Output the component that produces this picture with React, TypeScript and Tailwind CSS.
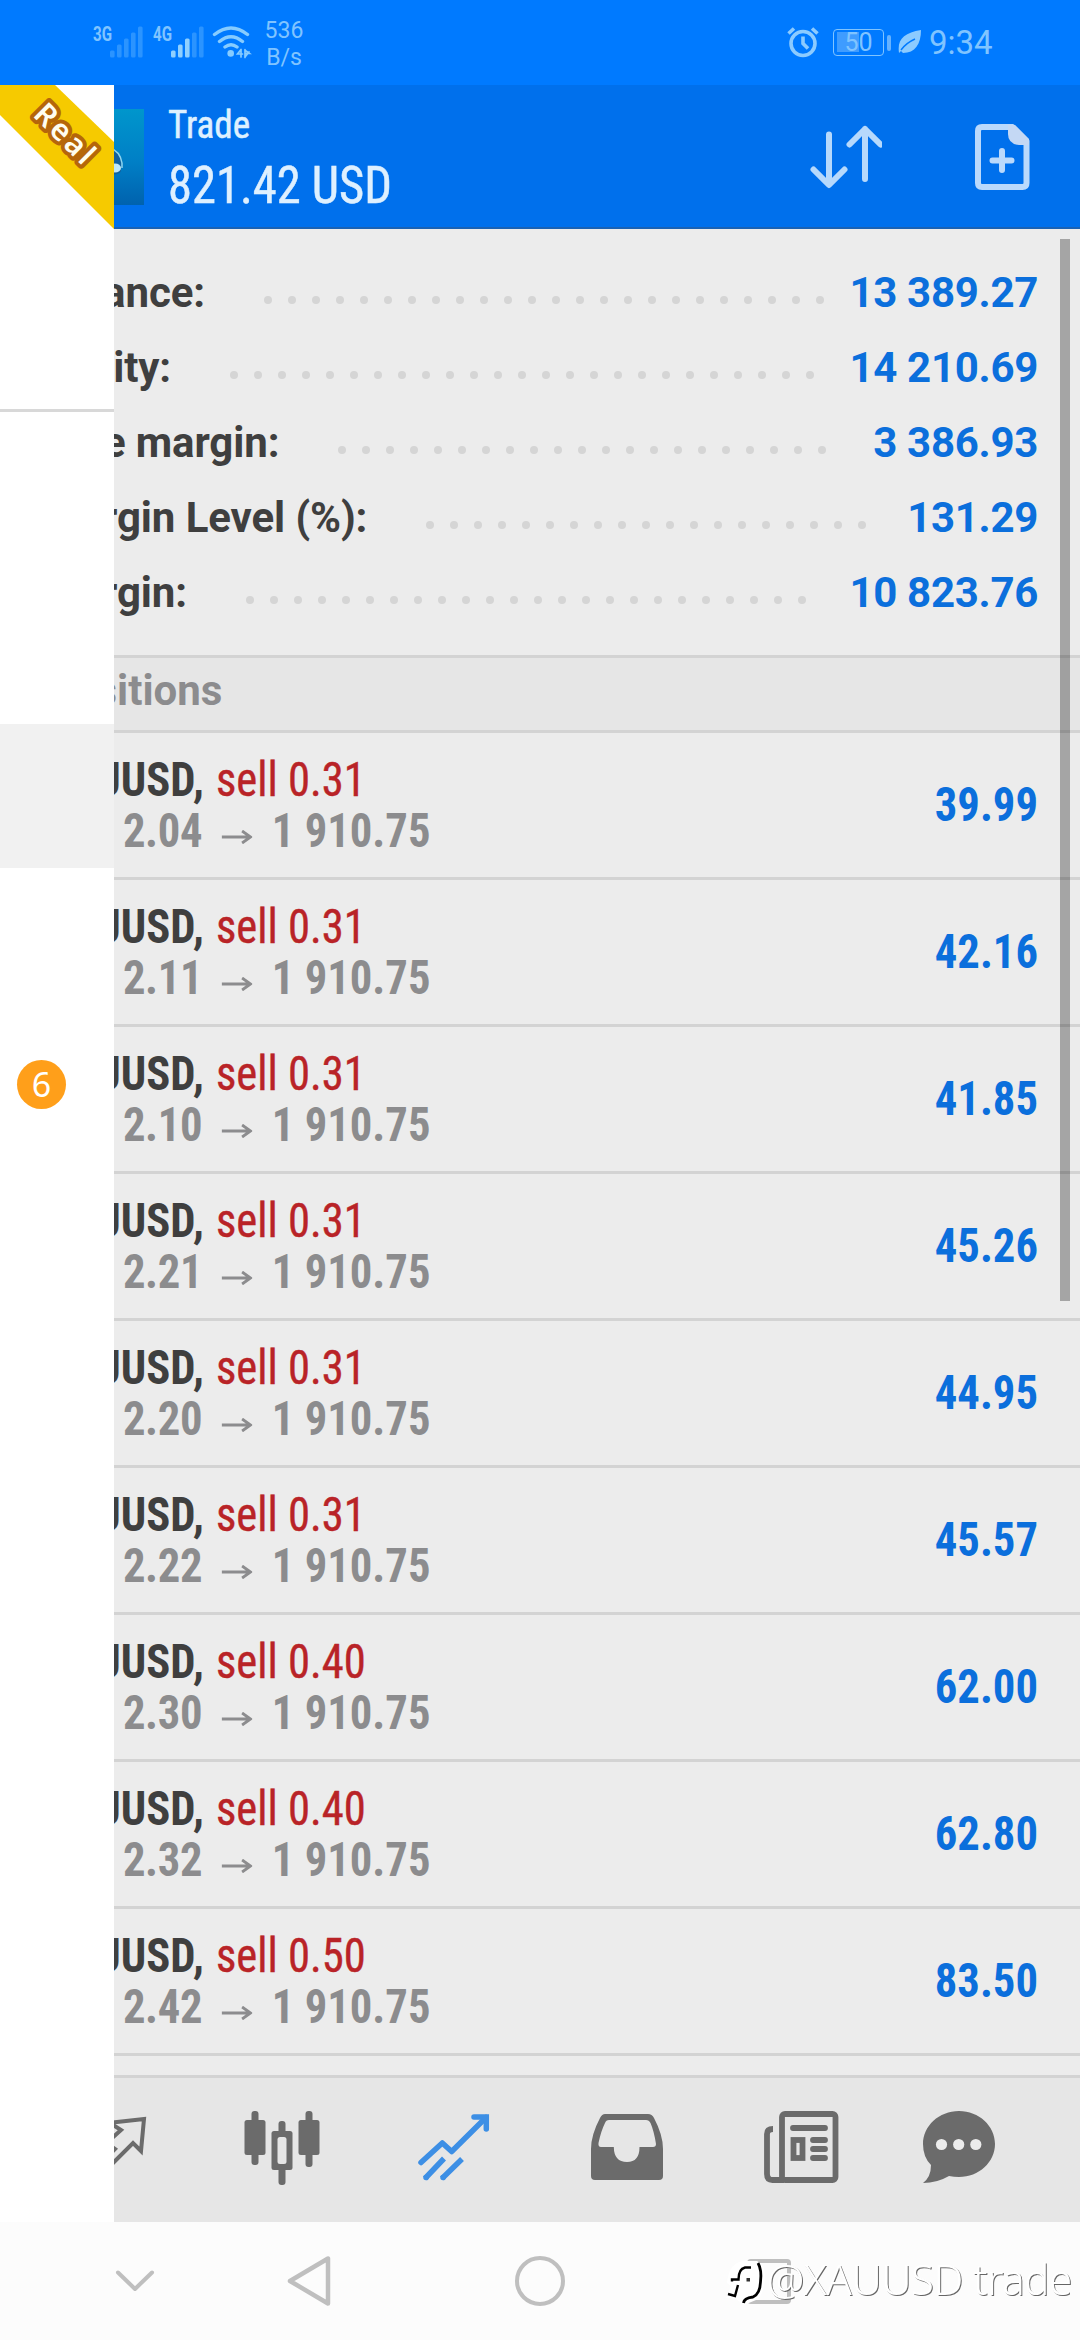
import type { ReactNode } from 'react';

const account = [
  { label: 'Balance:', dots: 24, value: '13 389.27' },
  { label: 'Equity:', dots: 25, value: '14 210.69' },
  { label: 'Free margin:', dots: 21, value: '3 386.93' },
  { label: 'Margin Level (%):', dots: 19, value: '131.29' },
  { label: 'Margin:', dots: 24, value: '10 823.76' },
];

const positions = [
  { volume: '0.31', open: '1 912.04', profit: '39.99' },
  { volume: '0.31', open: '1 912.11', profit: '42.16' },
  { volume: '0.31', open: '1 912.10', profit: '41.85' },
  { volume: '0.31', open: '1 912.21', profit: '45.26' },
  { volume: '0.31', open: '1 912.20', profit: '44.95' },
  { volume: '0.31', open: '1 912.22', profit: '45.57' },
  { volume: '0.40', open: '1 912.30', profit: '62.00' },
  { volume: '0.40', open: '1 912.32', profit: '62.80' },
  { volume: '0.50', open: '1 912.42', profit: '83.50' },
];

function Signal({ active }: { active: number }) {
  return (
    <svg className="mt-[26px] h-8 w-[34px]" viewBox="0 0 34 32" fill="#8fd0ff">
      {[7, 13, 19, 25, 31].map((h, i) => (
        <rect key={h} x={i * 7} y={31.5 - h} width="4.6" height={h} rx="1.5" opacity={i < active ? 1 : 0.3} />
      ))}
    </svg>
  );
}

function StatusBar() {
  return (
    <div className="flex h-[85px] items-start bg-[#007aff] text-[#80c4ff]">
      <span className="ml-[93px] mt-[24px] w-[17px] origin-left scale-x-[0.72] text-[21px] leading-5 font-bold">3G</span>
      <Signal active={0} />
      <span className="ml-[9px] mt-[24px] w-[18px] origin-left scale-x-[0.72] text-[21px] leading-5 font-bold">4G</span>
      <Signal active={3} />
      <svg className="ml-[7px] mt-[25px] h-[34px] w-10" viewBox="0 0 40 34" fill="none" stroke="#86ccff" strokeWidth="3.4" strokeLinecap="round">
        <path d="M2.5 9.5Q19 -3.5 35.5 9.5M7.5 16.5Q19 7 30.5 16.5M13 22Q19 17.5 25 22" />
        <circle cx="18.7" cy="28.4" r="3.3" fill="#86ccff" stroke="none" />
        <path d="M29 24.500v7.500M29 24.500l-3.500 4.500h5M33 24.500v8M33 28.500h4.500l-3.500-2.500M37 27l-4 5" strokeWidth="1.700" />
      </svg>
      <div className="ml-[12px] mt-[17px] w-10 text-center text-[23px] leading-[27px]">
        <div>536</div>
        <div>B/s</div>
      </div>

      <svg className="ml-auto mt-[25px] h-[34px] w-8" viewBox="0 0 32 34" fill="none" stroke="#8ccbff" strokeWidth="3.6">
        <circle cx="16" cy="18.500" r="12" />
        <path d="M16 11.500v7l5 5M1.500 8.500l5.500-5M30.500 8.500l-5.500-5" />
      </svg>
      <div className="ml-[14px] mt-[29px] flex h-[27px] w-[51px] items-center rounded-[4px] border border-[#80c4ff] bg-[linear-gradient(#3f9cff,#3f9cff)] bg-[length:22px_20px] bg-[position:3px_2px] bg-no-repeat">
        <span className="w-full text-center text-[25px] leading-[25px]">50</span>
      </div>
      <div className="ml-[3px] mt-[35px] h-4 w-[4px] rounded-sm bg-[#66b2ff]" />
      <svg className="ml-[7px] mt-[29px] h-[25px] w-6" viewBox="0 0 24 25">
        <path d="M1 24C-1 10 6 4 23 1c0 14-6 23-18 23l-2-2z" fill="#8ccbff" />
        <path d="M3 21Q8 14 17 10" fill="none" stroke="#007aff" strokeWidth="1.4" />
      </svg>
      <span className="ml-[7px] mt-[24px] w-[151px] text-[33px] leading-[38px]">9:34</span>
    </div>
  );
}

function Header() {
  return (
    <div className="flex h-[144px] border-b-2 border-[#1a62b4] bg-[#0070ec] text-[#def0ff]">
      <svg className="ml-12 mt-6 size-24" viewBox="0 0 96 96">
        <defs>
          <linearGradient id="sky" x1="0" y1="0" x2="0" y2="1">
            <stop offset="0" stopColor="#0096cc" />
            <stop offset="0.55" stopColor="#007fc6" />
            <stop offset="1" stopColor="#0062ae" />
          </linearGradient>
        </defs>
        <rect width="96" height="96" fill="url(#sky)" />
        <path d="M60 40Q72 42 73 54v8Q72 66 60 66z" fill="#12609c" />
        <path d="M62 39Q72 42 74 54v5" fill="none" stroke="#8fd4ee" strokeWidth="1.500" />
        <ellipse cx="67" cy="59" rx="6" ry="4.500" fill="#bfe8f8" />
      </svg>
      <div className="ml-[24px] origin-left scale-x-[0.952] pt-[18px] font-stretch-[75%] whitespace-nowrap [-webkit-text-stroke:0.5px_#def0ff]">
        <div className="text-[39px] leading-[44px]">Trade</div>
        <div className="mt-[9px] text-[51px] leading-[60px]">821.42 USD</div>
      </div>
      <svg className="ml-auto mt-[40px] h-[66px] w-[72px]" viewBox="0 0 72 66" fill="none" stroke="#b6d9fc" strokeWidth="6" strokeLinecap="round" strokeLinejoin="round">
        <path d="M19 9.500V59.500M3.500 44.500L19 60L34.500 44.500" />
        <path d="M55 54V4M39.500 19.500L55 4L70.500 19.500" />
      </svg>
      <svg className="ml-[93px] mr-[50px] mt-[39px] h-[66px] w-[55px]" viewBox="0 0 55 66" fill="none" stroke="#bad9fc" strokeWidth="6" strokeLinejoin="round">
        <path d="M7 3H37.500L51.500 17V59Q51.500 63 47.500 63H7Q3 63 3 59V7Q3 3 7 3Z" />
        <path d="M33 1H40L54 15V21H44Q33 20 33 10Z" fill="#c4d8f4" stroke="none" />
        <path d="M27 27V46M17.500 36.500H36.500" strokeLinecap="round" />
      </svg>
    </div>
  );
}

function Summary() {
  return (
    <div className="h-[426px] pt-[29px] pr-[42px] pl-[43px] text-[42px] font-bold">
      {account.map((row) => (
        <div key={row.label} className="flex h-[75px] items-start leading-[50px] whitespace-nowrap">
          <span className="pt-2.5 tracking-[-0.1px] text-[#3f3f3f]">{row.label}</span>
          <span className="mt-[38px] ml-[59px] flex gap-4">
            {Array.from({ length: row.dots }, (_, i) => (
              <span key={i} className="size-2 rounded-full bg-[#d5d5d5]" />
            ))}
          </span>
          <span className="ml-auto pt-2.5 tracking-[-0.3px] text-[#0b6fdc]">{row.value}</span>
        </div>
      ))}
    </div>
  );
}

function PositionRow({ volume, open, profit }: { volume: string; open: string; profit: string }) {
  // Last digits of the open price are set a little apart from the big figure
  const figure = open.slice(0, 4);
  const pips = open.slice(4);

  return (
    <div className="flex h-[147px] items-center justify-between border-b-[3px] border-[#d3d3d3] pr-[42px] pl-11 font-stretch-[75%] text-[48px] leading-[51px] whitespace-nowrap">
      <div className="origin-left scale-x-[0.93]">
        <div>
          <span className="font-bold text-[#3f3f3f]">XAUUSD,</span>{' '}
          <span className="ml-[2px] text-[#b92327] [-webkit-text-stroke:0.4px_#b92327]">sell {volume}</span>
        </div>
        <div className="-ml-[3px] flex items-center font-bold text-[#8c8c8e]">
          <span>{figure}</span>
          <span className="ml-[4px] tracking-[-0.4px]">{pips}</span>
          <svg className="mx-[21px] mt-3 h-[14px] w-[33px]" viewBox="0 0 33 14" fill="none" stroke="#8c8c8e" strokeWidth="3">
            <path d="M0 7H31M22 1L31 7L22 13" />
          </svg>
          <span>1 910.75</span>
        </div>
      </div>
      <span className="origin-right scale-x-[0.93] pb-[2px] font-bold text-[#0b6fdc]">{profit}</span>
    </div>
  );
}

function ToolIcon({ className = '', children }: { className?: string; children: ReactNode }) {
  return (
    <svg className={`h-[74px] w-[72px] shrink-0 overflow-visible ${className}`} viewBox="0 0 72 74">
      {children}
    </svg>
  );
}

function Toolbar() {
  return (
    <div className="flex h-[147px] gap-[100.5px] border-t-[3px] border-[#d3d3d3] bg-[#e6e6e6] pt-[33px] pl-[73px]">
      <ToolIcon>
        <g fill="none" stroke="#6b6b6b" strokeWidth="4">
          <path d="M35 12L71 8L68 40L60 32L36 56" />
          <path d="M37 12L48 19L38 28M38 35L42 38L38 42" />
        </g>
      </ToolIcon>
      <ToolIcon>
        <g fill="#6b6b6b">
          <rect x="5.500" y="0" width="7" height="54" rx="3" />
          <rect x="-1.500" y="9" width="21" height="35" rx="2.500" />
          <rect x="32.500" y="10" width="7" height="64" rx="3" />
          <rect x="25.500" y="20" width="21" height="39" rx="2.500" />
          <rect x="59.500" y="0" width="7" height="56" rx="3" />
          <rect x="52.500" y="9" width="21" height="35" rx="2.500" />
        </g>
        <rect x="31.500" y="26" width="9" height="27" rx="2.500" fill="#e6e6e6" />
      </ToolIcon>
      <ToolIcon>
        <g fill="none" stroke="#3d8fe5" strokeWidth="5.500">
          <path d="M3 51.500L24.300 32L33.700 40.500L68 6.500" strokeLinejoin="round" strokeLinecap="round" />
          <path d="M56 6H68.300V18" strokeLinecap="round" />
          <path d="M7 67.500L26 47.500M24 67.500L44 48" />
          <path d="M8 66.500h.1M25 66.500h.1" strokeLinecap="round" />
        </g>
      </ToolIcon>
      <ToolIcon>
        <path
          d="M17 3H57Q61 3 63 7Q72 24 72 38V65Q72 69 68 69H4Q0 69 0 65V38Q0 24 9 7Q11 3 14 3Z"
          fill="#6b6b6b"
        />
        <path d="M18 9H55Q58 9 59.500 12Q63 20 65 33Q65 36 62 36H48.500Q48.500 51 36 51Q23 51 22.800 36H10Q7 36 7.500 32Q10 20 14 12Q15 9 18 9Z" fill="#e6e6e6" />
      </ToolIcon>
      <ToolIcon className="translate-x-px">
        <g fill="none" stroke="#6b6b6b" strokeWidth="5.800">
          <rect x="18" y="3" width="53.500" height="66" rx="3" />
          <path d="M9 18Q3 18 3 23V63Q3 69 8.500 69H20" />
          <path d="M29 17H61M49 29H61M49 38H61M49 47H61" strokeLinecap="round" />
          <rect x="29.500" y="29" width="9" height="18" />
        </g>
      </ToolIcon>
      <ToolIcon className="-ml-[13px]">
        <path d="M36 0C56 0 72 15 72 33S56 66 36 66Q31 66 26 65Q14 72 0 72Q8 66 8 54Q0 46 0 33C0 15 16 0 36 0Z" fill="#6b6b6b" />
        <g fill="#ececec">
          <circle cx="18.500" cy="33.500" r="5.600" />
          <circle cx="35.700" cy="33.500" r="5.600" />
          <circle cx="52.800" cy="33.500" r="5.600" />
        </g>
      </ToolIcon>
    </div>
  );
}

function Drawer() {
  return (
    <div className="absolute top-[85px] left-0 h-[2137px] w-[114px] overflow-hidden bg-white">
      <div className="h-[324px]">
        <svg className="h-[144px] w-[114px]" viewBox="0 0 114 144">
          <path d="M0 0H55L114 57V144L0 30Z" fill="#f6ca00" />
          <text
            transform="translate(65.500 48.500) rotate(45)"
            x="1"
            y="11"
            textAnchor="middle"
            fontFamily="Noto Sans, sans-serif"
            fontSize="30"
            fontWeight="600"
            letterSpacing="3"
            fill="#fffdf0"
            stroke="#b5660a"
            strokeWidth="8"
            strokeLinejoin="round"
            paintOrder="stroke"
          >
            Real
          </text>
        </svg>
      </div>
      <div className="h-[3px] bg-[#d8d8d8]" />
      <div className="mt-[312px] h-36 bg-[#f1f1f1]" />
      <div className="mt-[192px] ml-[17px] flex size-[49px] items-center justify-center rounded-full bg-[#ff9f1a] pb-[2px] font-['Noto_Sans',sans-serif] text-[34px] leading-none text-white">
        6
      </div>
    </div>
  );
}

function NavBar() {
  return (
    <div className="relative flex h-[118px] items-center bg-[#fcfcfc]">
      <svg className="ml-[115px] h-[50px] w-10" viewBox="0 0 40 50" fill="none" stroke="#bfbfbf" strokeWidth="4" strokeLinecap="round" strokeLinejoin="round">
        <path d="M3 16.500L20 33L37 16.500" />
      </svg>
      <svg className="ml-[132px] h-[50px] w-11" viewBox="0 0 44 50" fill="none" stroke="#bfbfbf" strokeWidth="4.500" strokeLinejoin="round">
        <path d="M41 2.500V47.500L3 25Z" />
      </svg>
      <div className="ml-[184px] size-[50px] rounded-full border-4 border-[#bfbfbf]" />
      <div className="ml-[182px] h-[45px] w-[44px] rounded-[4px] border-4 border-[#bfbfbf]" />
      {/* Channel watermark over the buttons */}
      <div className="absolute top-[28px] left-[724px] flex items-center font-['Noto_Sans',sans-serif] text-[42px] leading-[57px] font-light tracking-[-0.5px] whitespace-nowrap text-white will-change-transform [text-shadow:1px_1px_0_#666]">
        <svg className="h-[54px] w-[43px]" viewBox="0 0 43 54">
          <path d="M2 46L7 34L3 31Q5 9 22 9H33Q41 12 41 25Q40 44 32 48L20 53L12 47Z" fill="#fff" />
          <path d="M8 29.500V27.500H14.500Q14.500 17 21 15.500H27M14 33L11 44L4 42" fill="none" stroke="#000" strokeWidth="2.400" />
          <path d="M34 11Q38 18 36.500 30Q36 42 29 45Q20 46 19.500 51" fill="none" stroke="#000" strokeWidth="2.800" />
          <rect x="22.500" y="26" width="3.500" height="3.500" fill="#333" />
        </svg>
        <span>@XAUUSD trade</span>
      </div>
    </div>
  );
}

export default function App() {
  return (
    <div className="relative h-[2340px] w-[1080px] overflow-hidden bg-[#ececec] font-[Roboto,sans-serif]">
      <StatusBar />
      <Header />
      <Summary />
      <div className="h-[78px] border-y-[3px] border-[#d3d3d3] bg-[#e6e6e6] pt-[3px] pl-[45px] text-[42px] leading-[60px] font-bold text-[#8c8c8e]">
        Positions
      </div>
      <div className="h-[1342px] overflow-hidden">
        {positions.map((p) => (
          <PositionRow key={p.open} {...p} />
        ))}
      </div>
      <Toolbar />
      <NavBar />
      <Drawer />
      <div className="absolute top-[239px] left-[1060px] h-[1062px] w-2.5 bg-black/30" />
    </div>
  );
}
